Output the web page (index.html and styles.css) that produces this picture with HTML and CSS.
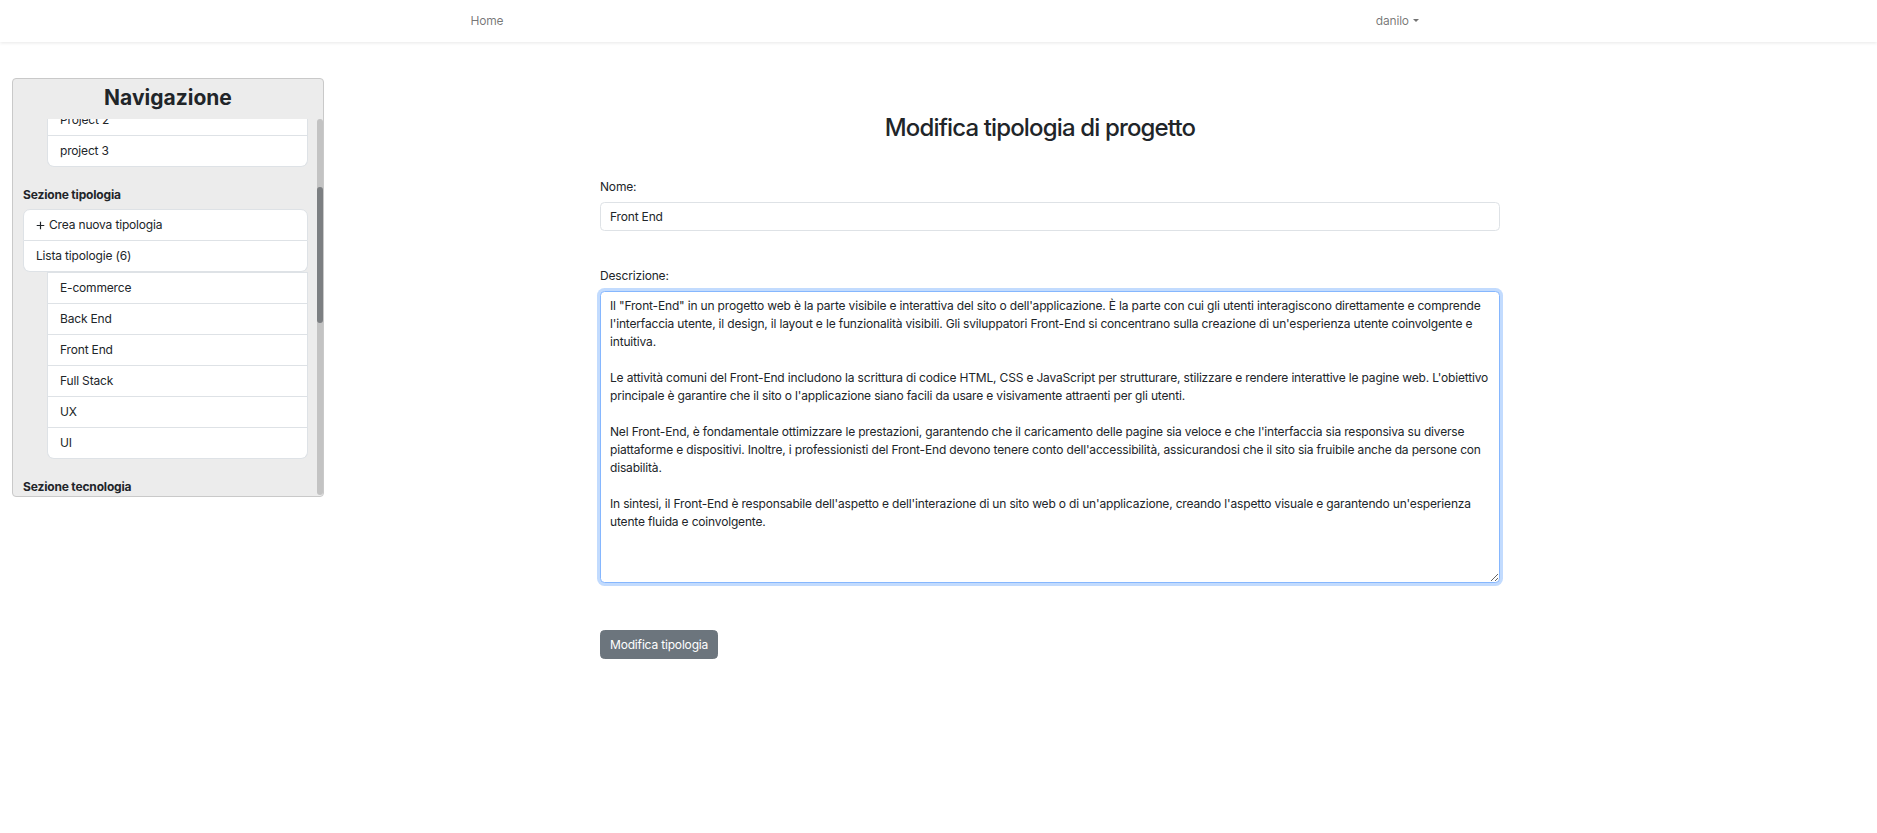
FILE: index.html
```html
<!DOCTYPE html>
<html lang="it">
<head>
<meta charset="utf-8">
<title>Modifica tipologia di progetto</title>
<link rel="stylesheet" href="styles.css">
</head>
<body>
<nav class="navbar">
  <div class="nav-inner">
    <ul class="nav-list nav-left">
      <li><a class="nav-link" href="#">Home</a></li>
    </ul>
    <ul class="nav-list nav-right">
      <li><a class="nav-link dropdown-toggle" href="#">danilo</a></li>
    </ul>
  </div>
</nav>

<div class="page">
  <aside class="sidebar">
    <div class="side-title">Navigazione</div>
    <div class="side-body">
      <div class="side-scroll">
        <ul class="lg">
          <li class="lg-item">Dashboard</li>
        </ul>
        <div class="sec-title">Sezione progetti</div>
        <ul class="lg lg-top">
          <li class="lg-item"><svg class="plus" viewBox="0 0 10 10"><path d="M5 0.8V9.2M0.8 5H9.2"/></svg>Crea nuovo progetto</li>
          <li class="lg-item">Lista progetti (3)</li>
        </ul>
        <ul class="lg lg-nested">
          <li class="lg-item">Project 1</li>
          <li class="lg-item">Project 2</li>
          <li class="lg-item">project 3</li>
        </ul>
        <div class="sec-title">Sezione tipologia</div>
        <ul class="lg lg-top">
          <li class="lg-item"><svg class="plus" viewBox="0 0 10 10"><path d="M5 0.8V9.2M0.8 5H9.2"/></svg>Crea nuova tipologia</li>
          <li class="lg-item">Lista tipologie (6)</li>
        </ul>
        <ul class="lg lg-nested">
          <li class="lg-item">E-commerce</li>
          <li class="lg-item">Back End</li>
          <li class="lg-item">Front End</li>
          <li class="lg-item">Full Stack</li>
          <li class="lg-item">UX</li>
          <li class="lg-item">UI</li>
        </ul>
        <div class="sec-title">Sezione tecnologia</div>
        <ul class="lg lg-top">
          <li class="lg-item"><svg class="plus" viewBox="0 0 10 10"><path d="M5 0.8V9.2M0.8 5H9.2"/></svg>Crea nuova tecnologia</li>
          <li class="lg-item">Lista tecnologie (12)</li>
        </ul>
        <ul class="lg lg-nested">
          <li class="lg-item">HTML</li>
          <li class="lg-item">CSS</li>
          <li class="lg-item">JavaScript</li>
          <li class="lg-item">PHP</li>
          <li class="lg-item">Laravel</li>
          <li class="lg-item">Vue.js</li>
          <li class="lg-item">React</li>
          <li class="lg-item">Angular</li>
          <li class="lg-item">MySQL</li>
          <li class="lg-item">Bootstrap</li>
          <li class="lg-item">Tailwind</li>
          <li class="lg-item">Node.js</li>
        </ul>
      </div>
      <div class="scrollbar"><div class="scrollbar-thumb"></div></div>
    </div>
  </aside>

  <main class="main">
    <form class="edit-form">
      <h2 class="page-title">Modifica tipologia di progetto</h2>
      <div class="field field-name">
        <label class="form-label" for="name">Nome:</label>
        <input class="form-control" id="name" type="text" value="Front End">
      </div>
      <div class="field field-desc">
        <label class="form-label" for="description">Descrizione:</label>
        <textarea class="form-control textarea is-focused" id="description">Il "Front-End" in un progetto web è la parte visibile e interattiva del sito o dell'applicazione. È la parte con cui gli utenti interagiscono direttamente e comprende
l'interfaccia utente, il design, il layout e le funzionalità visibili. Gli sviluppatori Front-End si concentrano sulla creazione di un'esperienza utente coinvolgente e
intuitiva.

Le attività comuni del Front-End includono la scrittura di codice HTML, CSS e JavaScript per strutturare, stilizzare e rendere interattive le pagine web. L'obiettivo
principale è garantire che il sito o l'applicazione siano facili da usare e visivamente attraenti per gli utenti.

Nel Front-End, è fondamentale ottimizzare le prestazioni, garantendo che il caricamento delle pagine sia veloce e che l'interfaccia sia responsiva su diverse
piattaforme e dispositivi. Inoltre, i professionisti del Front-End devono tenere conto dell'accessibilità, assicurandosi che il sito sia fruibile anche da persone con
disabilità.

In sintesi, il Front-End è responsabile dell'aspetto e dell'interazione di un sito web o di un'applicazione, creando l'aspetto visuale e garantendo un'esperienza
utente fluida e coinvolgente.</textarea>
      </div>
      <button class="btn" type="button">Modifica tipologia</button>
    </form>
  </main>
</div>
<script src="script.js"></script>
</body>
</html>
```

FILE: styles.css
```css
* { box-sizing: border-box; }

html, body {
  margin: 0;
  padding: 0;
}

body {
  font-family: "Inter", "Liberation Sans", sans-serif;
  font-size: 12px;
  line-height: 18px;
  letter-spacing: -0.17px;
  color: #212529;
  background: #ffffff;
}

/* ---------- navbar ---------- */
.navbar {
  height: 42px;
  padding: 6px 0;
  background: #fff;
  box-shadow: 0 1.5px 3px rgba(0, 0, 0, 0.075);
}

.nav-inner {
  width: 990px;
  margin: 0 auto;
  padding: 0 9px;
  display: flex;
  justify-content: space-between;
  align-items: center;
}

.nav-list {
  list-style: none;
  margin: 0;
  padding: 0;
  display: flex;
}

.nav-left { margin-left: 12px; }

.nav-link {
  display: block;
  padding: 6px;
  color: rgba(0, 0, 0, 0.55);
  text-decoration: none;
  line-height: 18px;
}

.dropdown-toggle::after {
  content: "";
  display: inline-block;
  margin-left: 0.3em;
  vertical-align: 0.255em;
  border-top: 0.3em solid;
  border-right: 0.3em solid transparent;
  border-left: 0.3em solid transparent;
  border-bottom: 0;
}

/* ---------- layout ---------- */
.page {
  display: flex;
  align-items: flex-start;
}

/* ---------- sidebar ---------- */
.sidebar {
  width: 312px;
  height: 419px;
  margin: 36px 0 0 12px;
  background: #ececec;
  border: 1px solid #c9c9c9;
  border-radius: 4px;
  display: flex;
  flex-direction: column;
  flex: none;
}

.side-title {
  text-align: center;
  font-size: 21px;
  line-height: 25px;
  font-weight: 700;
  letter-spacing: 0;
  padding-top: 6px;
  margin-bottom: 9px;
}

.side-body {
  flex: 1;
  min-height: 0;
  display: flex;
  padding-bottom: 1px;
}

.side-scroll {
  flex: 1;
  min-width: 0;
  overflow-y: scroll;
  scrollbar-width: none;
  padding: 10px 9px 27px 10px;
}

.side-scroll::-webkit-scrollbar { display: none; }

.scrollbar {
  width: 6px;
  flex: none;
  background: #c3c3c3;
  border-radius: 3px;
}

.scrollbar-thumb {
  margin-top: 68px;
  height: 136px;
  background: #7c7f82;
  border-radius: 3px;
}

.sec-title {
  font-weight: 700;
  margin: 19px 0 5px;
  line-height: 18px;
}

.lg {
  list-style: none;
  margin: 0;
  padding: 0;
  border-radius: 7px;
}

.lg-item {
  display: flex;
  align-items: center;
  background: #fff;
  border: 1px solid #dee2e6;
  padding: 6px 12px;
  line-height: 18px;
}

.lg-item + .lg-item { border-top-width: 0; }

.lg > .lg-item:first-child { border-top-left-radius: 7px; border-top-right-radius: 7px; }
.lg > .lg-item:last-child { border-bottom-left-radius: 7px; border-bottom-right-radius: 7px; }

.lg-nested { margin-left: 24px; }
.lg-nested > .lg-item:first-child { border-top-left-radius: 0; border-top-right-radius: 0; }

.plus {
  width: 9px;
  height: 9px;
  margin-right: 4px;
  flex: none;
}

.plus path {
  stroke: #212529;
  stroke-width: 1.3;
  fill: none;
}

/* ---------- main ---------- */
.main {
  flex: 1;
}

.edit-form {
  width: 900px;
  margin-left: 276px;
  padding-top: 71px;
}

.page-title {
  margin: 0 0 36px;
  padding-right: 20px;
  font-size: 24px;
  line-height: 29px;
  font-weight: 500;
  letter-spacing: -0.85px;
  text-align: center;
}

.field-name { margin-bottom: 36px; }
.field-desc { margin-bottom: 47px; }

.form-label {
  display: block;
  margin-bottom: 6px;
  line-height: 18px;
}

.form-control {
  display: block;
  width: 100%;
  padding: 4.5px 9px;
  font-family: inherit;
  font-size: 12px;
  line-height: 18px;
  letter-spacing: -0.17px;
  color: #212529;
  background: #fff;
  border: 1px solid #dee2e6;
  border-radius: 4.5px;
  outline: none;
}

.textarea {
  height: 292px;
  resize: vertical;
  white-space: pre;
  overflow: hidden;
}

.is-focused {
  border-color: #86b7fe;
  box-shadow: 0 0 0 3px rgba(13, 110, 253, 0.25);
}

.btn {
  display: inline-block;
  padding: 4.5px 9px;
  font-family: inherit;
  font-size: 12px;
  line-height: 18px;
  letter-spacing: -0.17px;
  color: #fff;
  background: #6c757d;
  border: 1px solid #6c757d;
  border-radius: 4.5px;
}
```

FILE: script.js
```js
document.querySelector('.side-scroll').scrollTop = 193;
```
